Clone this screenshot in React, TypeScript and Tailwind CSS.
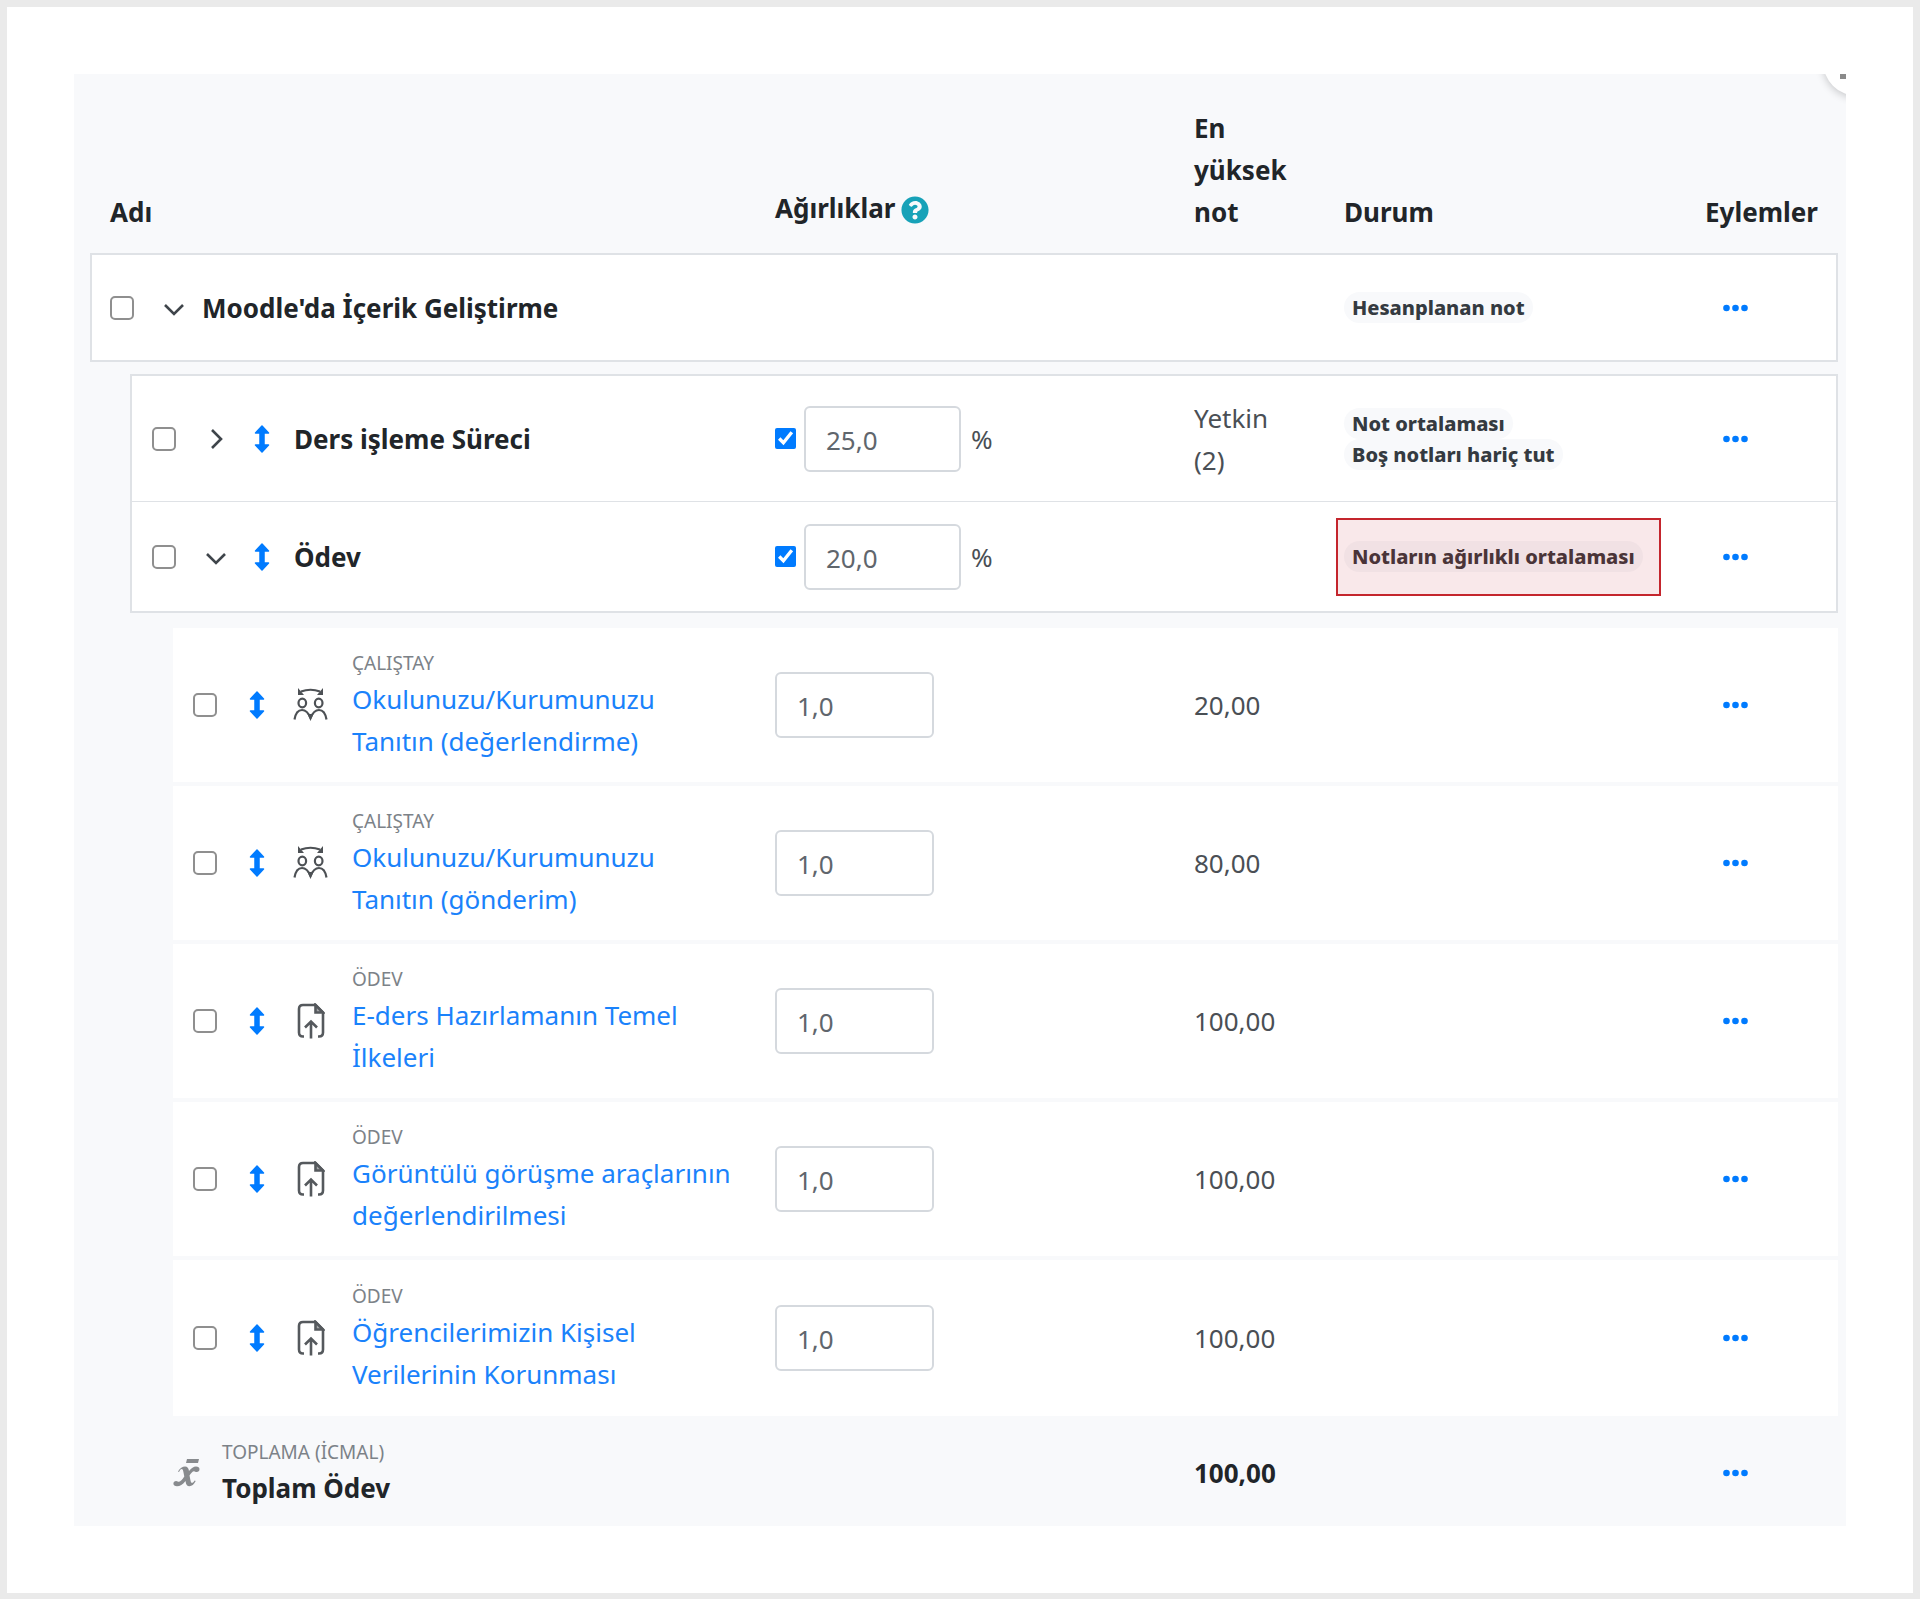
import { useState } from 'react';
import { FaQuestionCircle } from 'react-icons/fa';

interface GradeItem {
    id: string;
    kind: 'workshop' | 'assign';
    type: string;
    name: string;
    weight: string;
    max: string;
}

const categories = [
    {
        id: 'ders',
        name: 'Ders işleme Süreci',
        open: false,
        weight: '25,0',
        max: 'Yetkin (2)',
        status: ['Not ortalaması', 'Boş notları hariç tut'],
        highlight: false,
    },
    {
        id: 'odev',
        name: 'Ödev',
        open: true,
        weight: '20,0',
        max: '',
        status: ['Notların ağırlıklı ortalaması'],
        highlight: true,
    },
];

const items: GradeItem[] = [
    { id: 'i1', kind: 'workshop', type: 'ÇALIŞTAY', name: 'Okulunuzu/Kurumunuzu Tanıtın (değerlendirme)', weight: '1,0', max: '20,00' },
    { id: 'i2', kind: 'workshop', type: 'ÇALIŞTAY', name: 'Okulunuzu/Kurumunuzu Tanıtın (gönderim)', weight: '1,0', max: '80,00' },
    { id: 'i3', kind: 'assign', type: 'ÖDEV', name: 'E-ders Hazırlamanın Temel İlkeleri', weight: '1,0', max: '100,00' },
    { id: 'i4', kind: 'assign', type: 'ÖDEV', name: 'Görüntülü görüşme araçlarının değerlendirilmesi', weight: '1,0', max: '100,00' },
    { id: 'i5', kind: 'assign', type: 'ÖDEV', name: 'Öğrencilerimizin Kişisel Verilerinin Korunması', weight: '1,0', max: '100,00' },
];

// Icons
const MoveIcon = () => (
    <svg width="16" height="28" viewBox="0 0 16 28" fill="#007bff" stroke="#007bff" strokeWidth="1.5" strokeLinejoin="round">
        <path d="M8 1l6.5 7H10v12h4.500L8 27l-6.500-7H6V8H1.500z" />
    </svg>
);

const ChevronIcon = ({ open }: { open: boolean }) => (
    <svg width="20" height="20" viewBox="0 0 20 20" fill="none" stroke="#3f454b" strokeWidth="2.6">
        <path d={open ? 'M1 7l9 9 9-9' : 'M6 1l9 9-9 9'} />
    </svg>
);

const DotsIcon = () => (
    <svg width="25" height="8" viewBox="0 0 25 8" fill="#007bff">
        <circle cx="3.500" cy="4" r="3.300" />
        <circle cx="12.500" cy="4" r="3.300" />
        <circle cx="21.500" cy="4" r="3.300" />
    </svg>
);

const WorkshopIcon = () => (
    <svg width="35" height="36" viewBox="0 0 35 36" fill="none" stroke="#4d5155" strokeWidth="2.2">
        <path d="M8 4.500q9.500-3.500 19 0" />
        <path d="M5 1v7h6zM30 1v7h-6z" fill="#4d5155" stroke="none" />
        <ellipse cx="9.300" cy="16" rx="3.800" ry="4.300" />
        <ellipse cx="25.700" cy="16" rx="3.800" ry="4.300" />
        <path d="M1.500 32.500c1-6 3.500-9.500 7.500-9.500s6.500 3 8.500 8c2-5 4.500-8 8.500-8s6.500 3.500 7.500 9.500" />
        <path d="M14.500 27h6l-3 6.500z" fill="#4d5155" stroke="none" />
    </svg>
);

const AssignIcon = () => (
    <svg width="28" height="36" viewBox="0 0 28 36" fill="none" stroke="#55595d" strokeWidth="2.6">
        <path d="M7 33.500H6q-4 0-4-4V6q0-4 4-4h12.500L26 9.500v20q0 4-4 4h-1" />
        <path d="M18.500 2v7.500H26z" fill="#a4a6a8" />
        <path d="M14 35.500V19M8 24.500l6-6 6 6" />
    </svg>
);

const MeanIcon = () => (
    <svg width="27" height="28" viewBox="0 0 27 28" fill="#888b8e">
        <path d="M14 0h12l-1 4H13z" />
        <path d="M5 12.500C7 9 9.500 7.500 12 7.500c2.500 0 3.500 1.500 4 4.500C18.500 9 20.500 7.500 23 7.500c2.200 0 3.500 1 3.500 2.800 0 1.700-1.200 2.700-2.800 2.700-1.300 0-1.700-.8-2.700-.8-1.400 0-2.800 1.600-4.500 4.300l.9 4.500c.4 2 .8 2.800 1.600 2.800.9 0 1.700-.9 2.700-2.300l1 .6c-1.800 3.400-3.800 5.200-6.200 5.200-2.500 0-3.500-1.600-4-5.300C9.500 25.800 7 27.300 4 27.300c-2.200 0-3.600-1-3.600-2.800 0-1.600 1.200-2.600 2.700-2.600 1.400 0 1.900.8 2.900.8 1.500 0 3.200-1.900 5.300-5.200l-1-5c-.4-1.800-.8-2.500-1.700-2.500-.9 0-1.700.9-2.600 3z" />
    </svg>
);

// Shared controls
const SelectBox = ({ label }: { label: string }) => (
    <input
        type="checkbox"
        aria-label={label}
        className="size-6 shrink-0 appearance-none rounded-[5px] border-2 border-[#8f8f8f] bg-white"
    />
);

const WeightInput = ({ value, label, width }: { value: string; label: string; width: string }) => (
    <input
        type="text"
        defaultValue={value}
        aria-label={label}
        className={`block h-[66px] rounded-md border-2 border-[#d5d9de] bg-white px-5 pt-0.5 text-[#5f666d] ${width}`}
    />
);

const ActionsButton = ({ label }: { label: string }) => (
    <button type="button" aria-label={label} className="flex h-10 items-center px-[18px]">
        <DotsIcon />
    </button>
);

const Badge = ({ text }: { text: string }) => (
    <span className="block w-fit rounded-full bg-[#f8f9fb] px-2 text-[20px] leading-[31px] font-extrabold whitespace-nowrap text-[#343a40]">
        {text}
    </span>
);

export default function App() {
    const [overrides, setOverrides] = useState<Record<string, boolean>>({ ders: true, odev: true });

    return (
        <main className="min-h-screen border-[7px] border-[#eaeaea] bg-white px-[67px] pt-[67px] pb-[67px] font-['Noto_Sans','Segoe_UI',sans-serif] text-[26px] leading-[42px] text-[#4a4f55]">
            <div className="relative overflow-hidden bg-[#f8f9fb] pr-2 pl-4">
                <button
                    type="button"
                    aria-label="Menü"
                    className="absolute -top-[47px] -right-[46px] size-[69px] rounded-full bg-white shadow-[0_2px_8px_rgba(0,0,0,0.2)]"
                >
                    <span className="absolute bottom-[17px] left-[17px] size-[6px] bg-[#8a8a8a]" />
                </button>
                <table className="w-full table-fixed border-separate border-spacing-0 text-left">
                    <colgroup>
                        <col className="w-10" />
                        <col className="w-[43px]" />
                        <col />
                        <col className="w-[419px]" />
                        <col className="w-[150px]" />
                        <col className="w-[361px]" />
                        <col className="w-[149px]" />
                    </colgroup>
                    <thead>
                        <tr className="h-[179px] align-bottom text-[#212529]">
                            <th colSpan={3} className="px-5 pb-5">Adı</th>
                            <th className="px-4 pb-6">
                                <span className="flex items-center gap-1.5">
                                    Ağırlıklar
                                    <button type="button" aria-label="Ağırlıklar yardımı" className="pt-1">
                                        <FaQuestionCircle className="size-7 text-[#17a2b8]" />
                                    </button>
                                </span>
                            </th>
                            <th className="px-4 pb-5">En yüksek not</th>
                            <th className="px-4 pb-5">Durum</th>
                            <th className="pb-5 pl-4">Eylemler</th>
                        </tr>
                    </thead>
                    <tbody>
                        <tr className="h-[109px]">
                            <td colSpan={3} className="border-y-2 border-l-2 border-[#dfe2e6] bg-white pl-[18px]">
                                <div className="flex items-center">
                                    <SelectBox label="Moodle'da İçerik Geliştirme seç" />
                                    <button type="button" aria-label="Daralt" className="ml-[30px]">
                                        <ChevronIcon open />
                                    </button>
                                    <span className="ml-[18px] font-bold text-[#212529]">Moodle'da İçerik Geliştirme</span>
                                </div>
                            </td>
                            <td className="border-y-2 border-[#dfe2e6] bg-white" />
                            <td className="border-y-2 border-[#dfe2e6] bg-white" />
                            <td className="border-y-2 border-[#dfe2e6] bg-white px-4">
                                <Badge text="Hesanplanan not" />
                            </td>
                            <td className="border-y-2 border-r-2 border-[#dfe2e6] bg-white pl-4">
                                <ActionsButton label="Moodle'da İçerik Geliştirme eylemleri" />
                            </td>
                        </tr>
                        <tr className="h-3" aria-hidden="true">
                            <td colSpan={7} />
                        </tr>
                        {categories.map((cat) => {
                            const line = cat.open ? 'border-b-2 h-[111px]' : 'border-t-2 border-b h-[128px]';
                            return (
                                <tr key={cat.id}>
                                    <td />
                                    <td colSpan={2} className={`border-l-2 border-[#dfe2e6] bg-white pl-5 ${line}`}>
                                        <div className="flex items-center">
                                            <SelectBox label={`${cat.name} seç`} />
                                            <button type="button" aria-label={cat.open ? 'Daralt' : 'Genişlet'} className="ml-[30px]">
                                                <ChevronIcon open={cat.open} />
                                            </button>
                                            <button type="button" aria-label="Taşı" className="ml-7">
                                                <MoveIcon />
                                            </button>
                                            <span className="ml-6 font-bold text-[#212529]">{cat.name}</span>
                                        </div>
                                    </td>
                                    <td className={`border-[#dfe2e6] bg-white px-4 ${line}`}>
                                        <div className="flex items-center">
                                            <input
                                                type="checkbox"
                                                aria-label={`${cat.name} ağırlığını ayarla`}
                                                checked={overrides[cat.id]}
                                                onChange={(e) => setOverrides({ ...overrides, [cat.id]: e.target.checked })}
                                                className="mr-2 size-[21px] accent-[#007bff]"
                                            />
                                            <WeightInput value={cat.weight} label={`${cat.name} ağırlığı`} width="w-[157px]" />
                                            <span className="ml-2.5">%</span>
                                        </div>
                                    </td>
                                    <td className={`border-[#dfe2e6] bg-white pr-6 pl-4 ${line}`}>{cat.max}</td>
                                    <td className={`border-[#dfe2e6] bg-white ${line} ${cat.highlight ? 'px-2' : 'px-4'}`}>
                                        {cat.highlight ? (
                                            <div className="flex h-[78px] w-[325px] items-center border-2 border-[#c4252d] bg-[#f9e8ea] px-1.5">
                                                <span className="rounded-full bg-[#f1e1e4] px-2 text-[20px] leading-[31px] font-extrabold whitespace-nowrap text-[#4a3438]">
                                                    {cat.status[0]}
                                                </span>
                                            </div>
                                        ) : (
                                            cat.status.map((s) => <Badge key={s} text={s} />)
                                        )}
                                    </td>
                                    <td className={`border-r-2 border-[#dfe2e6] bg-white pl-4 ${line}`}>
                                        <ActionsButton label={`${cat.name} eylemleri`} />
                                    </td>
                                </tr>
                            );
                        })}
                        <tr className="h-[15px]" aria-hidden="true">
                            <td colSpan={7} />
                        </tr>
                        {items.map((item, index) => {
                            const line = index < items.length - 1 ? 'border-b-4 h-[158px]' : 'h-[156px]';
                            return (
                                <tr key={item.id}>
                                    <td colSpan={2} />
                                    <td className={`border-[#f8f9fb] bg-white pl-5 ${line}`}>
                                        <div className="flex items-center">
                                            <SelectBox label={`${item.name} seç`} />
                                            <button type="button" aria-label="Taşı" className="ml-8">
                                                <MoveIcon />
                                            </button>
                                            <span className="ml-7 flex w-[35px] shrink-0 justify-center">
                                                {item.kind === 'workshop' ? <WorkshopIcon /> : <AssignIcon />}
                                            </span>
                                            <div className="ml-6 w-[390px]">
                                                <div className="text-[19px] leading-[30px] text-[#7c8288]">{item.type}</div>
                                                <a href={`#${item.id}`} className="block text-[#1a82fb]">
                                                    {item.name}
                                                </a>
                                            </div>
                                        </div>
                                    </td>
                                    <td className={`border-[#f8f9fb] bg-white px-4 ${line}`}>
                                        <WeightInput value={item.weight} label={`${item.name} ağırlığı`} width="w-[159px]" />
                                    </td>
                                    <td className={`border-[#f8f9fb] bg-white px-4 ${line}`}>{item.max}</td>
                                    <td className={`border-[#f8f9fb] bg-white ${line}`} />
                                    <td className={`border-[#f8f9fb] bg-white pl-4 ${line}`}>
                                        <ActionsButton label={`${item.name} eylemleri`} />
                                    </td>
                                </tr>
                            );
                        })}
                        <tr className="h-[110px] font-bold text-[#212529]">
                            <td colSpan={2} />
                            <td className="pt-1">
                                <div className="flex items-center">
                                    <MeanIcon />
                                    <div className="ml-[22px]">
                                        <div className="text-[19px] leading-[30px] font-normal text-[#7c8288]">TOPLAMA (İCMAL)</div>
                                        <div>Toplam Ödev</div>
                                    </div>
                                </div>
                            </td>
                            <td />
                            <td className="px-4 pt-1">100,00</td>
                            <td />
                            <td className="pt-1 pl-4">
                                <ActionsButton label="Toplam Ödev eylemleri" />
                            </td>
                        </tr>
                    </tbody>
                </table>
            </div>
        </main>
    );
}
